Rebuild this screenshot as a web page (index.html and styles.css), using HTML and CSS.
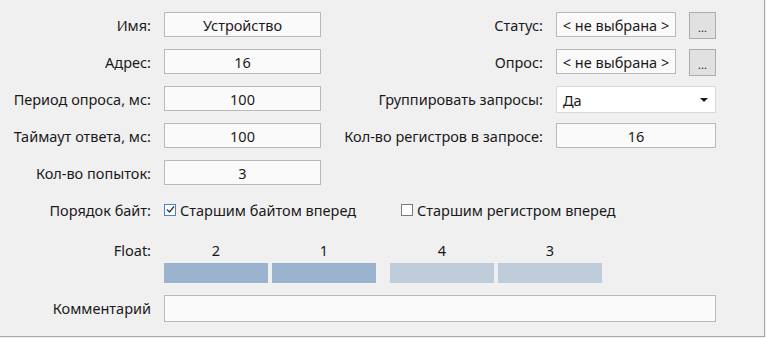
FILE: index.html
```html
<!DOCTYPE html>
<html lang="ru">
<head>
    <meta charset="UTF-8">
    <title>Настройки устройства</title>
    <link rel="stylesheet" href="styles.css">
</head>
<body>
    <div class="panel">
        <div class="form">
            <label class="lbl">Имя:</label>
            <div class="field">Устройство</div>
            <label class="lbl">Статус:</label>
            <div class="pick">
                <div class="field">&lt; не выбрана &gt;</div>
                <button class="dots">...</button>
            </div>

            <label class="lbl">Адрес:</label>
            <div class="field">16</div>
            <label class="lbl">Опрос:</label>
            <div class="pick">
                <div class="field">&lt; не выбрана &gt;</div>
                <button class="dots">...</button>
            </div>

            <label class="lbl">Период опроса, мс:</label>
            <div class="field">100</div>
            <label class="lbl">Группировать запросы:</label>
            <div class="combo">
                <span>Да</span>
                <span class="arrow"></span>
            </div>

            <label class="lbl">Таймаут ответа, мс:</label>
            <div class="field">100</div>
            <label class="lbl">Кол-во регистров в запросе:</label>
            <div class="field">16</div>

            <label class="lbl">Кол-во попыток:</label>
            <div class="field">3</div>
            <div class="skip"></div>

            <label class="lbl">Порядок байт:</label>
            <div class="checks">
                <div class="check first">
                    <span class="box on">
                        <svg width="9" height="9" viewBox="0 0 9 9"><path d="M1 4.5 L3.5 7 L8 1.5" fill="none" stroke="#333" stroke-width="1.3"/></svg>
                    </span>
                    Старшим байтом вперед
                </div>
                <div class="check">
                    <span class="box"></span>
                    Старшим регистром вперед
                </div>
            </div>

            <label class="lbl float-lbl">Float:</label>
            <div class="bytes">
                <div class="byte"><span>2</span><div class="bar"></div></div>
                <div class="byte"><span>1</span><div class="bar"></div></div>
                <div class="byte second"><span>4</span><div class="bar"></div></div>
                <div class="byte second"><span>3</span><div class="bar"></div></div>
            </div>

            <label class="lbl">Комментарий</label>
            <div class="field comment"></div>
        </div>
    </div>
</body>
</html>
```

FILE: styles.css
```css
body {
    margin: 0;
    background-color: #f0f0f0;
    font-family: "Noto Sans", Arial, sans-serif;
    font-size: 14.5px;
    color: #1a1a1a;
}

.panel {
    width: 764px;
    height: 336px;
    border-right: 1px solid #a8a8a8;
    border-bottom: 1px solid #a8a8a8;
}

.form {
    display: grid;
    grid-template-columns: 151px 157px 209px 160px;
    grid-template-rows: repeat(6, 25px) 49px 27px;
    column-gap: 13px;
    row-gap: 12px;
    padding-top: 12px;
}

.lbl {
    text-align: right;
    line-height: 27px;
    white-space: nowrap;
}

.field {
    box-sizing: border-box;
    height: 25px;
    line-height: 24px;
    border: 1px solid #b9b9b9;
    background-color: #fafafa;
    text-align: center;
    white-space: nowrap;
}

.pick {
    display: flex;
    gap: 13px;
    align-items: flex-start;
}

.pick .field {
    flex: 1;
}

.dots {
    box-sizing: border-box;
    width: 27px;
    height: 27px;
    padding: 0;
    border: 1px solid #adadad;
    background-color: #e1e1e1;
    font-family: inherit;
    font-size: 11px;
    line-height: 30px;
    color: #1a1a1a;
}

.combo {
    box-sizing: border-box;
    height: 27px;
    border: 1px solid #d9d9d9;
    background-color: #fff;
    display: flex;
    align-items: center;
    justify-content: space-between;
    padding: 1px 7px 0 6px;
}

.arrow {
    width: 0;
    height: 0;
    border-left: 4px solid transparent;
    border-right: 4px solid transparent;
    border-top: 4px solid #1a1a1a;
}

.skip {
    grid-column: span 2;
}

.checks {
    grid-column: 2 / 5;
    display: flex;
    align-items: center;
}

.check {
    display: flex;
    align-items: center;
    gap: 4px;
    white-space: nowrap;
}

.check.first {
    width: 237px;
}

.box {
    box-sizing: border-box;
    width: 12px;
    height: 12px;
    border: 1px solid #7a7a7a;
    background-color: #fff;
    display: flex;
    align-items: center;
    justify-content: center;
}

.box.on {
    border-color: #3f86d0;
}

.float-lbl {
    padding-top: 4px;
    line-height: 25px;
    align-self: start;
}

.bytes {
    grid-column: 2 / 5;
    display: flex;
    gap: 4px;
    padding-top: 4px;
}

.byte {
    width: 104px;
    text-align: center;
}

.byte span {
    display: block;
    line-height: 25px;
    font-size: 14.5px;
}

.byte .bar {
    height: 20px;
    background-color: #9ab3cf;
}

.byte.second .bar {
    background-color: #bfccda;
}

.byte.second:nth-child(3) {
    margin-left: 10px;
}

.comment {
    grid-column: 2 / 5;
    height: 27px;
}
```
